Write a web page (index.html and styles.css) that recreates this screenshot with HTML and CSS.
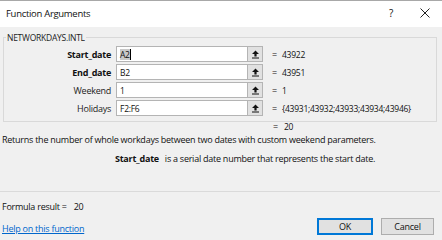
FILE: index.html
```html
<!DOCTYPE html>
<html>
<head>
<meta charset="utf-8">
<link rel="stylesheet" href="styles.css">
</head>
<body>
<div class="dialog">
  <div class="titlebar">
    <span class="title">Function Arguments</span>
    <span class="tb-btn help">?</span>
    <span class="tb-btn close">
      <svg width="10" height="10" viewBox="0 0 10 10"><path d="M0.5 0.5 L9.5 9.5 M9.5 0.5 L0.5 9.5" stroke="#222" stroke-width="1" fill="none"/></svg>
    </span>
  </div>
  <div class="body">
    <fieldset class="group">
      <legend class="legend">NETWORKDAYS.INTL</legend>
      <div class="args">
        <div class="arg">
          <span class="label bold">Start_date</span>
          <span class="input"><span class="sel">A2</span><span class="caret"></span></span>
          <span class="pick"><svg width="9" height="9" viewBox="0 0 9 9"><path d="M4.5 0.5 L8 4 L5.6 4 L5.6 6.5 L3.4 6.5 L3.4 4 L1 4 Z M1 7.6 H8 V8.6 H1 Z" fill="#111"/></svg></span>
          <span class="eq">=</span>
          <span class="val">43922</span>
        </div>
        <div class="arg">
          <span class="label bold">End_date</span>
          <span class="input">B2</span>
          <span class="pick"><svg width="9" height="9" viewBox="0 0 9 9"><path d="M4.5 0.5 L8 4 L5.6 4 L5.6 6.5 L3.4 6.5 L3.4 4 L1 4 Z M1 7.6 H8 V8.6 H1 Z" fill="#111"/></svg></span>
          <span class="eq">=</span>
          <span class="val">43951</span>
        </div>
        <div class="arg">
          <span class="label">Weekend</span>
          <span class="input">1</span>
          <span class="pick"><svg width="9" height="9" viewBox="0 0 9 9"><path d="M4.5 0.5 L8 4 L5.6 4 L5.6 6.5 L3.4 6.5 L3.4 4 L1 4 Z M1 7.6 H8 V8.6 H1 Z" fill="#111"/></svg></span>
          <span class="eq">=</span>
          <span class="val">1</span>
        </div>
        <div class="arg">
          <span class="label">Holidays</span>
          <span class="input">F2:F6</span>
          <span class="pick"><svg width="9" height="9" viewBox="0 0 9 9"><path d="M4.5 0.5 L8 4 L5.6 4 L5.6 6.5 L3.4 6.5 L3.4 4 L1 4 Z M1 7.6 H8 V8.6 H1 Z" fill="#111"/></svg></span>
          <span class="eq">=</span>
          <span class="val">{43931;43932;43933;43934;43946}</span>
        </div>
      </div>
    </fieldset>
    <div class="result-line"><span class="eq">=</span><span class="val">20</span></div>
    <p class="desc">Returns the number of whole workdays between two dates with custom weekend parameters.</p>
    <p class="argdesc"><span class="argname">Start_date</span><span>is a serial date number that represents the start date.</span></p>
    <div class="sep"></div>
    <div class="formula">Formula result =<span class="fval">20</span></div>
    <div class="footer">
      <a class="helplink" href="#">Help on this function</a>
      <div class="buttons">
        <button class="btn default">OK</button>
        <button class="btn">Cancel</button>
      </div>
    </div>
  </div>
</div>
</body>
</html>
```
FILE: styles.css
```css
* { box-sizing: border-box; }
html, body { margin: 0; padding: 0; }
body {
  width: 442px;
  height: 240px;
  overflow: hidden;
  background: #f0f0f0;
  font-family: "Open Sans", "Noto Sans", sans-serif;
  font-size: 9px;
  letter-spacing: -0.25px;
  color: #111;
}
.dialog {
  width: 442px;
  height: 240px;
  border-top: 1px solid #a8a8a8;
  display: flex;
  flex-direction: column;
}
.titlebar {
  height: 26px;
  background: #fff;
  display: flex;
  align-items: center;
  padding-left: 6px;
}
.title {
  font-size: 9.5px;
  letter-spacing: -0.3px;
  flex: 1;
  margin-top: -2px;
  color: #111;
}
.tb-btn {
  display: flex;
  align-items: center;
  justify-content: center;
  margin-top: -2px;
}
.help {
  width: 14px;
  font-size: 10px;
  margin-right: 21px;
}
.close {
  width: 12px;
  margin-right: 11px;
}
.body {
  flex: 1;
  display: flex;
  flex-direction: column;
}
.group {
  margin: 6px 5px 0 3px;
  padding: 4px 0 5px 0;
  border: 1px solid #d9d9d9;
  min-width: 0;
}
.legend {
  font-size: 8.5px;
  padding: 0 1px;
  margin-left: 2px;
  line-height: 9px;
  color: #222;
}
.args {
  display: flex;
  flex-direction: column;
  gap: 2px;
}
.arg {
  display: flex;
  align-items: center;
  height: 16px;
}
.label {
  width: 107px;
  text-align: right;
  margin-right: 5px;
  color: #222;
}
.bold { font-weight: 700; color: #111; }
.input {
  width: 131px;
  height: 16px;
  background: #fff;
  border: 1px solid #b4b4b4;
  border-right: none;
  display: flex;
  align-items: center;
  padding-left: 3px;
  font-size: 8.5px;
}
.sel {
  background: #c8c8c8;
  line-height: 11px;
}
.caret {
  width: 1px;
  height: 11px;
  background: #000;
}
.pick {
  width: 16px;
  height: 16px;
  border: 1px solid #b4b4b4;
  background: #e1e1e1;
  display: flex;
  align-items: center;
  justify-content: center;
}
.eq {
  margin-left: 9px;
  width: 10px;
}
.val {
  font-size: 8.5px;
}
.result-line {
  display: flex;
  align-items: center;
  height: 12px;
  margin-top: -2px;
  padding-left: 264px;
}
.result-line .eq { margin-left: 9px; width: 11px; }
.desc {
  margin: 2px 0 0 2px;
  line-height: 12px;
}
.argdesc {
  margin: 7px 0 0 115px;
  line-height: 12px;
  display: flex;
  gap: 6px;
}
.argname { font-weight: 700; }
.sep {
  margin-top: 26px;
  height: 1px;
  background: #dadada;
  margin-right: 2px;
}
.formula {
  margin: 9px 0 0 2px;
  line-height: 12px;
}
.fval { margin-left: 7px; }
.footer {
  display: flex;
  align-items: center;
  justify-content: space-between;
  margin-top: 4px;
  padding: 0 8px 0 2px;
}
.helplink {
  color: #0066cc;
  text-decoration: underline;
  margin-top: 5px;
}
.buttons {
  display: flex;
  gap: 8px;
}
.btn {
  font-family: inherit;
  font-size: 9px;
  letter-spacing: -0.2px;
  height: 17px;
  background: #e1e1e1;
  border: 1px solid #adadad;
  padding: 0;
  color: #111;
}
.btn.default {
  width: 56px;
  border: 2px solid #0078d7;
}
.btn:not(.default) { width: 53px; }
```
